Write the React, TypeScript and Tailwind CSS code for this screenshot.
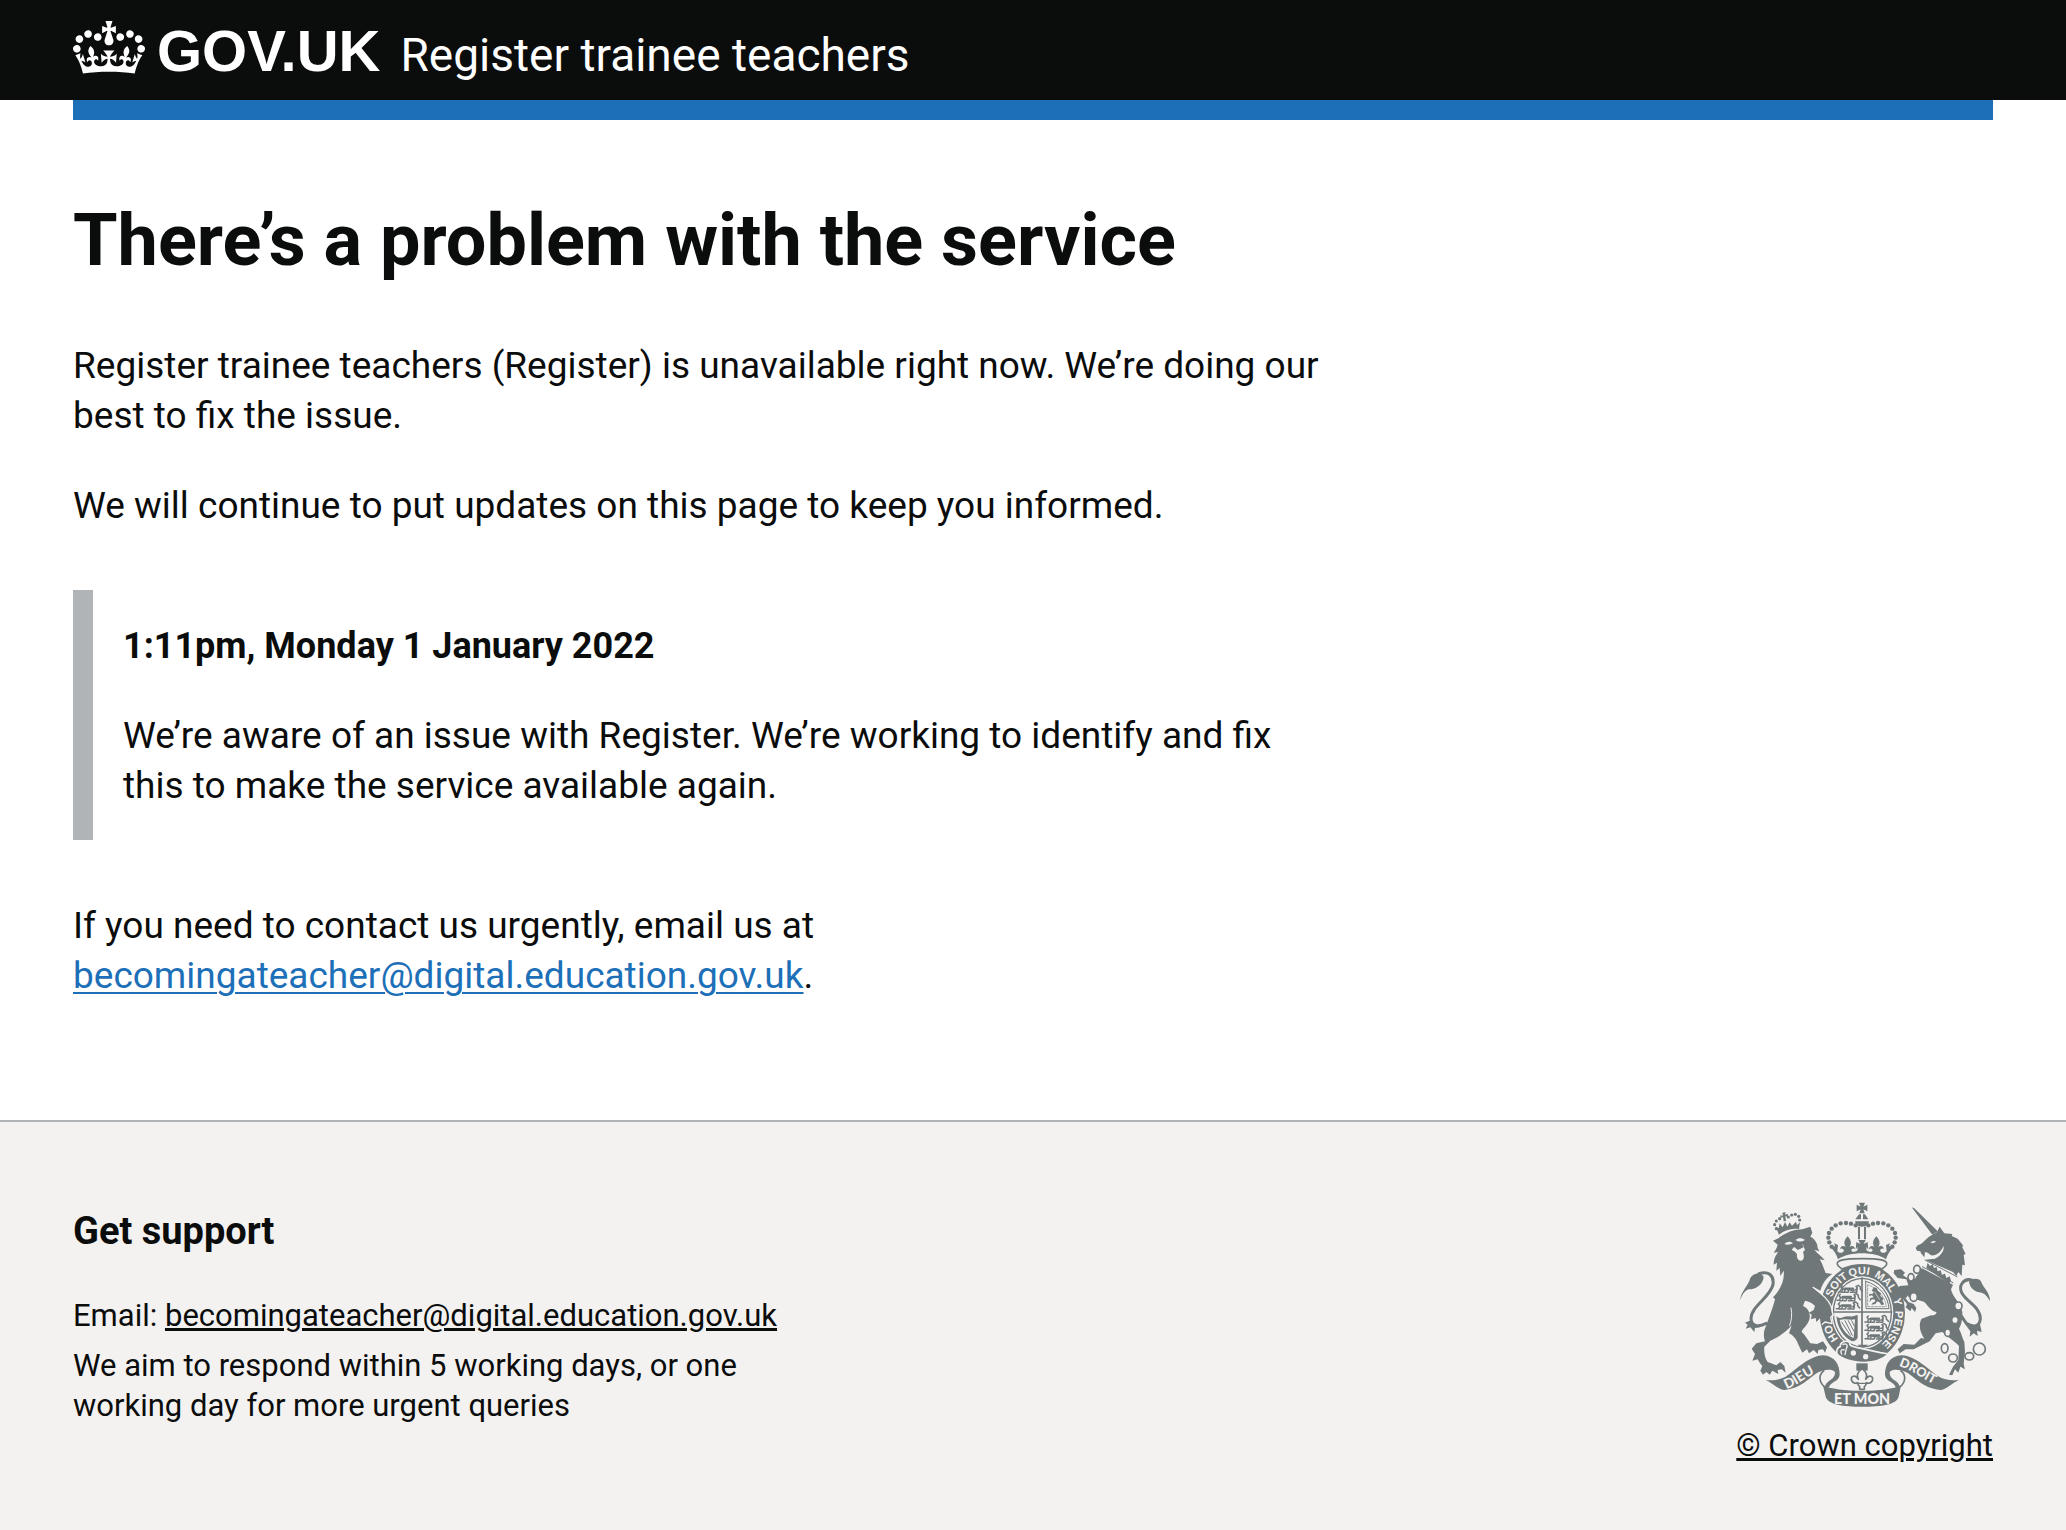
const EMAIL = 'becomingateacher@digital.education.gov.uk';

const CROWN_PATH =
  'M25 30.2c3.5 1.5 7.7-.2 9.1-3.7 1.5-3.6-.2-7.8-3.9-9.2-3.6-1.4-7.6.3-9.1 3.9-1.4 3.5.3 7.5 3.9 9zM9 39.5c3.6 1.5 7.8-.2 9.2-3.7 1.5-3.6-.2-7.8-3.9-9.1-3.6-1.5-7.6.2-9.1 3.8-1.4 3.5.3 7.5 3.8 9zM4.4 57.2c3.5 1.5 7.7-.2 9.1-3.8 1.5-3.6-.2-7.7-3.9-9.1-3.5-1.5-7.6.3-9.1 3.8-1.4 3.5.3 7.6 3.9 9.1zm38.3-21.4c3.5 1.5 7.7-.2 9.1-3.8 1.5-3.6-.2-7.7-3.9-9.1-3.6-1.5-7.6.3-9.1 3.8-1.3 3.6.4 7.7 3.9 9.1zm64.4-5.6c-3.6 1.5-7.8-.2-9.1-3.7-1.5-3.6.2-7.8 3.8-9.2 3.6-1.4 7.7.3 9.2 3.9 1.3 3.5-.4 7.5-3.9 9zm15.9 9.3c-3.6 1.5-7.7-.2-9.1-3.7-1.5-3.6.2-7.8 3.7-9.1 3.6-1.5 7.7.2 9.2 3.8 1.5 3.5-.3 7.5-3.8 9zm4.7 17.7c-3.6 1.5-7.8-.2-9.2-3.8-1.5-3.6.2-7.7 3.9-9.1 3.6-1.5 7.7.3 9.2 3.8 1.3 3.5-.4 7.6-3.9 9.1zM89.3 35.8c-3.6 1.5-7.8-.2-9.2-3.8-1.4-3.6.2-7.7 3.9-9.1 3.6-1.5 7.7.3 9.2 3.8 1.4 3.6-.3 7.7-3.9 9.1zM69.7 17.7l8.9 4.7V9.3l-8.9 2.8c-.2-.3-.5-.6-.9-.9L72.4 0H59.6l3.5 11.2c-.3.3-.6.5-.9.9l-8.8-2.8v13.1l8.8-4.7c.3.3.6.7.9.9l-5 15.4v.1c-.2.8-.4 1.6-.4 2.4 0 4.1 3.1 7.5 7 8.1h.2c.3 0 .7.1 1 .1.4 0 .7 0 1-.1h.2c4-.6 7.1-4.1 7.1-8.1 0-.8-.1-1.7-.4-2.4V34l-5.1-15.4c.4-.2.7-.6 1-.9zM66 92.8c16.9 0 32.8 1.1 47.1 3.2 4-16.9 8.9-26.7 14-33.5l-9.6-3.4c1 4.9 1.1 7.2 0 10.2-1.5-1.4-3-4.3-4.2-8.7L108.6 76c2.8-2 5-3.2 7.5-3.3-4.4 9.4-10 11.9-13.6 11.2-4.3-.8-6.3-4.6-5.6-7.9 1-4.7 5.7-5.9 8-.5 4.3-8.7-3-11.4-7.6-8.8 7.1-7.2 7.9-13.5 2.1-21.1-8 6.1-8.1 12.3-4.5 20.8-4.7-5.4-12.1-2.5-9.5 6.2 3.4-5.2 7.9-2 7.2 3.1-.6 4.3-6.4 7.8-13.5 7.2-10.3-.9-10.9-8-11.2-13.8 2.5-.5 7.1 1.8 11 7.3L80.2 60c-4.1 4.4-8 5.3-12.3 5.4 1.4-4.4 8-11.6 8-11.6H55.5s6.4 7.2 7.9 11.6c-4.2-.1-8-1-12.3-5.4l1.4 16.4c3.9-5.5 8.5-7.7 10.9-7.3-.3 5.8-.9 12.8-11.1 13.8-7.2.6-12.9-2.9-13.5-7.2-.7-5 3.8-8.3 7.1-3.1 2.7-8.7-4.6-11.6-9.4-6.2 3.7-8.5 3.6-14.7-4.6-20.8-5.8 7.6-5 13.9 2.2 21.1-4.7-2.6-11.9.1-7.7 8.8 2.3-5.5 7.1-4.2 8.1.5.7 3.3-1.3 7.1-5.7 7.9-3.5.7-9-1.8-13.5-11.2 2.5.1 4.7 1.3 7.5 3.3l-4.7-15.4c-1.2 4.4-2.7 7.2-4.3 8.7-1.1-3-.9-5.3 0-10.2l-9.5 3.4c5 6.9 9.9 16.7 14 33.5 14.8-2.1 30.8-3.2 47.7-3.2z';

function CrownIcon() {
  return (
    <svg aria-hidden="true" viewBox="0 0 132 97" className="h-[53px] w-[72px] shrink-0 self-start" fill="currentColor">
      <path fillRule="evenodd" d={CROWN_PATH} />
    </svg>
  );
}

const INK = '#6f7779';
const PAPER = '#f3f2f1';

const ARCH_BEADS: [number, number][] = [
  [398, 104], [384, 99], [369, 97], [353, 98], [338, 104], [326, 114], [318, 127], [316, 141], [319, 155], [326, 168],
];

/* Half of the crown's jewelled band: fleur-de-lis, half crosses and the rim. */
const CROWN_HALF =
  'M418 188C388 188 362 194 345 206C341 192 334 180 324 171L336 166L333 158L345 163L343 182C352 190 360 186 363 180C360 172 354 172 352 176C350 166 362 162 369 170C360 158 365 146 374 137C383 146 388 158 379 170C386 162 396 166 396 176C392 171 386 173 385 180C390 186 398 184 404 178L403 168L398 178L400 154L412 160L406 148H418z';

/* Left-hand side of the ribbon under the shield; the right is its mirror. */
const RIBBON_HALF =
  'M128 567C150 572 172 566 188 558C220 538 256 496 300 494C336 496 350 522 350 552C348 574 322 572 318 590L306 590C306 568 338 570 336 544C326 532 300 538 288 544C262 556 240 592 184 598C166 596 152 580 128 567z';

function RoyalArms() {
  return (
    <svg aria-hidden="true" viewBox="48 34 756 618" className="h-[206px] w-[252px]" fill={INK} strokeLinecap="round" strokeLinejoin="round">
      <defs>
        <path id="garter" d="M348 447A99 115 0 0 1 319 366A99 115 0 0 1 418 251A99 115 0 0 1 517 366A99 115 0 0 1 467 466L440 476" />
        <path id="motto-left" d="M190 595C230 582 258 548 312 535" />
        <path id="motto-right" d="M527 526C565 535 600 570 660 592" />
      </defs>

      {/* garter and shield */}
      <ellipse cx="418" cy="367" rx="128" ry="148" />
      <ellipse cx="418" cy="366" rx="93" ry="109" fill={PAPER} />
      <ellipse cx="418" cy="366" rx="89" ry="105" />
      <ellipse cx="418" cy="366" rx="85" ry="101" fill={PAPER} />
      <g fontFamily="Liberation Sans, sans-serif" fontWeight="700" fill={PAPER} fontSize="33">
        <text><textPath href="#garter" startOffset="3">HO</textPath></text>
        <text><textPath href="#garter" startOffset="134">SOIT</textPath></text>
        <text><textPath href="#garter" startOffset="217">QUI</textPath></text>
        <text><textPath href="#garter" startOffset="291">MAL</textPath></text>
        <text><textPath href="#garter" startOffset="382">Y</textPath></text>
        <text><textPath href="#garter" startOffset="418">PENSE</textPath></text>
      </g>
      <path d="M330 364H506M417 262V470" stroke={INK} strokeWidth="5" fill="none" />
      {/* first and fourth quarters: three lions passant */}
      {[[346, 288], [340, 313], [338, 338], [424, 378], [424, 403], [424, 428]].map(([x, y]) => (
        <g key={`${x}-${y}`} transform={`translate(${x} ${y})`} fill="none" stroke={INK} strokeWidth="4.5">
          <path d="M2 16h8l2-8 8-2 6 3 8-2 4 4 14-1 5-6-4-5 7-3 6 5v6l6 7M14 9l-6-7 4-4M20 10l-2 7h-7M32 10l-3 7h-7M44 11v6h-8M56 8l-1 9h-7" />
          <path d="M20 6h24" strokeWidth="7" />
        </g>
      ))}
      {/* second quarter: lion rampant in a tressure */}
      <path d="M428 272L429 354H498C496 320 470 283 428 272z" fill="none" stroke={INK} strokeWidth="3" />
      <path d="M434 282V348H490C486 320 466 294 434 282z" fill="none" stroke={INK} strokeWidth="2" strokeDasharray="7 4" />
      <path d="M452 290l10 2 2 8 10 8-2 8 9 6-3 10 6 9-9 3-4-8-8-4-6 8-12 2 4-6 6-2 2-7-10-1-8 8 3-12 10-2-5-6-9 2 1-6 10-1 3-5-6-4z" />
      <path d="M455 304l8 12 6 10" stroke={PAPER} strokeWidth="2" fill="none" />
      {/* third quarter: harp */}
      <path d="M340 376C352 390 362 374 378 377C392 380 396 373 404 373V440C402 450 392 454 384 450C362 438 344 414 340 376zM350 388C354 412 370 434 392 442L396 386C382 390 366 382 350 388z" fillRule="evenodd" />
      <path d="M366 390l22 44M376 390l17 32M386 390l8 16M356 394l26 40" stroke={INK} strokeWidth="3" fill="none" />
      <path d="M404 462h32l-12 8h-12z" />

      {/* royal crown */}
      <path d="M408 36h18l-5 12 12-6v20l-12-6 4 12h-16l4-12-12 6v-20l12 6z" />
      <path d="M408 71h6v15h-17zM420 71h6l10 15h-16zM396 92h42c-2 10-10 16-21 16s-19-6-21-16zM405 108h6v38h-6zM423 108h6v38h-6z" />
      {[1, -1].map((s) => (
        <g key={s} transform={s === 1 ? undefined : 'translate(834 0) scale(-1 1)'}>
          {ARCH_BEADS.map(([cx, cy]) => (
            <circle key={cx} cx={cx} cy={cy} r="6.6" />
          ))}
          <path d={CROWN_HALF} />
          <circle cx="352" cy="182" r="3" fill={PAPER} />
        </g>
      ))}
      <path d="M417 204C470 204 494 208 491 221C488 230 482 228 478 235Q417 210 356 235C352 228 346 230 343 221C340 208 364 204 417 204z" fill={PAPER} stroke={INK} strokeWidth="5" />

      {/* lion */}
      <g>
        {[[160, 114], [155, 102], [160, 91], [170, 84], [196, 79], [206, 73], [217, 71], [227, 77], [230, 88]].map(([cx, cy]) => (
          <circle key={`${cx}-${cy}`} cx={cx} cy={cy} r="4.8" />
        ))}
        <path d="M178 66l10-1-2 7 8-3 1 9-8-1 2 14-7 1-2-13-7 3-1-8 8 1zM158 108l9 5 3-15 9 12 7-16 7 14 7-13 7 10 12-12 3 10 9-8-3 20C206 112 186 118 168 132z" />
        <path d="M150 150L166 143C186 126 216 116 238 116L262 108L268 126L262 138C274 144 284 156 284 172L289 182L274 177C284 190 298 198 305 209L290 206C300 222 302 234 308 247L328 250C310 262 298 278 292 300L270 288C286 306 312 322 322 344L327 372L318 380L322 394L306 390L298 397L292 382L280 394L278 382L264 386L266 372L258 366L272 358L276 346C268 336 258 332 246 330L240 346C258 354 266 374 256 394C248 410 238 414 236 424C246 432 252 444 262 458L282 460L300 452L312 470L306 486L300 476L286 478L284 490L272 478L258 488L252 476L238 486L228 466C222 450 214 436 198 428L206 404C190 424 160 444 142 450L124 468C122 484 126 504 134 514L160 524L172 514L184 526L188 546L176 536L164 538L166 550L148 540L140 552L130 544L120 552L112 540L118 526L110 516L104 506L88 510L96 490L86 474L100 458L126 452C120 436 122 420 130 404C140 376 152 344 156 326L150 320C170 300 186 270 182 240L172 256L170 232L160 240L162 216L152 222C152 202 160 192 166 184L152 186C158 178 162 170 164 162z" />
        <path d="M184 160C194 150 204 152 210 158C202 162 192 164 184 160zM218 148C226 140 238 142 246 148C236 154 226 154 218 148zM206 178C218 160 236 158 240 162L246 178L240 184C244 196 244 206 236 210C226 212 220 202 222 190L214 182z" fill={PAPER} />
        <path d="M208 164L236 158L242 170L224 178z" />
        <path d="M270 290C292 306 316 326 324 346L331 374L323 380L327 399L306 394L298 401" stroke={PAPER} strokeWidth="4" fill="none" />
        <path d="M204 352C208 370 206 390 200 404" stroke={PAPER} strokeWidth="3" fill="none" />
        <path d="M108 249C136 240 154 254 150 282C142 320 84 346 84 384C86 408 104 410 130 398" stroke={INK} strokeWidth="9" fill="none" />
        <path d="M52 328C52 304 76 286 82 262C92 246 112 244 122 258C120 280 102 296 76 296C64 302 56 314 52 328zM66 396L80 390L112 410L96 412L94 424L82 410L68 414L74 402z" />
      </g>

      {/* unicorn */}
      <g>
        <path d="M566 50L574 53L644 122L628 132z" />
        <path d="M618 138L642 124L650 108L664 128L688 130L686 136L704 144L720 164L718 170L728 190L722 192L726 224L718 222L716 256L706 244L700 256L690 244L606 208C614 204 626 206 636 204C650 196 664 184 662 166C652 186 640 196 624 194L614 186L606 184L604 200L594 188L592 182L582 180L578 172L584 164C598 160 606 148 618 138z" />
        <path d="M622 154L636 150L638 154L628 158z" fill={PAPER} />
        <path d="M604 206L704 258L692 282L596 230z" fill={PAPER} />
        <path d="M606 208L702 258M598 228L690 276" stroke={INK} strokeWidth="3" fill="none" />
        <path d="M610 232l4-16 7 10 8-6 4 12 8-3 3 13 9-3 4 13 9-3 4 13 10-5 4 14-6 8z" />
        <path d="M596 232L690 282L684 296C688 320 712 334 718 364C718 386 716 402 708 414C716 430 718 442 724 454L726 484L722 520L726 536L712 528L706 546L696 536L688 554L678 552L690 528L706 508L708 466C696 452 672 438 658 424L638 428L620 452L572 476L548 476L530 488L524 476L542 460L574 462L594 442L604 444C590 424 586 400 596 384L624 374C634 376 642 370 640 364C624 362 616 346 604 334L574 324L556 318L542 300L538 296L540 312L556 334L572 340L580 352L576 364L566 352L562 362L548 350L552 340L534 318L524 310L530 286L556 284L550 266L524 262L512 248L514 238L534 236L546 246L540 254L562 268L576 264C582 252 592 244 596 232z" />
        <path d="M524 290L536 286L560 300L550 322L542 320z" />
        <g fill={PAPER} stroke={INK} strokeWidth="5">
          <ellipse cx="582" cy="236" rx="10" ry="12" />
          <ellipse cx="564" cy="260" rx="9" ry="11" />
          <ellipse cx="572" cy="319" rx="11" ry="13" />
          <ellipse cx="706" cy="346" rx="11" ry="12" />
          <ellipse cx="696" cy="388" rx="10" ry="11" />
          <ellipse cx="674" cy="426" rx="9" ry="11" />
          <ellipse cx="665" cy="473" rx="10" ry="14" />
          <ellipse cx="690" cy="502" rx="13" ry="12" />
          <ellipse cx="739" cy="497" rx="13" ry="11" />
          <circle cx="769" cy="475" r="18" />
        </g>
        <path d="M746 268C722 262 706 284 716 306C728 332 772 348 772 384C770 408 752 412 730 398L712 372" stroke={INK} strokeWidth="9" fill="none" />
        <path d="M801 332C802 306 778 288 774 272C764 260 746 264 738 274C742 294 756 304 776 306C788 310 794 320 801 332zM726 400L742 422L740 438L752 428L764 436L762 420L776 424L770 396L756 410z" />
      </g>

      {/* buckle of the garter */}
      <path d="M346 494C336 486 342 470 352 468C350 456 368 446 380 456C378 468 392 468 400 470L472 486L498 490C470 514 430 520 390 512C372 508 360 504 346 494z" stroke={PAPER} strokeWidth="5" />
      <path d="M356 490C350 482 356 474 364 478M360 462C370 456 376 464 370 474L366 492" stroke={PAPER} strokeWidth="4" fill="none" />
      <circle cx="391" cy="487" r="8" fill={PAPER} />
      <circle cx="428" cy="498" r="8" fill={PAPER} />

      {/* motto ribbon */}
      {[1, -1].map((s) => (
        <g key={s} transform={s === 1 ? undefined : 'translate(836 0) scale(-1 1)'}>
          <path d={RIBBON_HALF} />
          <path d="M302 541C286 552 288 574 304 588" stroke={INK} strokeWidth="5" fill="none" />
        </g>
      ))}
      <path d="M300 584C340 606 494 606 534 584L527 618C520 642 476 648 418 648C360 648 316 642 308 618z" />
      <g fontFamily="Lato, sans-serif" fontWeight="900" fill={PAPER}>
        <text fontSize="41"><textPath href="#motto-left">DIEU</textPath></text>
        <text fontSize="38"><textPath href="#motto-right">DROIT</textPath></text>
        <text x="417" y="639" textAnchor="middle" fontSize="43">ET MON</text>
      </g>

      {/* pendant fleur-de-lis */}
      <path d="M400 518h34v22h-34z" />
      <path d="M417 534C430 544 434 556 428 566C438 550 452 556 448 570C444 580 434 578 430 576C430 584 426 586 424 588V596H410V588C408 586 404 584 404 576C400 578 390 580 386 570C382 556 396 550 406 566C400 556 404 544 417 534z" fill={PAPER} stroke={INK} strokeWidth="5" />
      <path d="M404 578H430" stroke={INK} strokeWidth="4" />
    </svg>
  );
}

function Header() {
  return (
    <header className="bg-[#0b0c0c] px-[73px] text-white">
      <div className="mx-auto h-[100px] max-w-[1920px] pt-[21px]">
        <a href="#home" className="flex items-baseline gap-3 leading-[60px]" aria-label="GOV.UK Register trainee teachers">
          <CrownIcon />
          <span className="font-['Liberation_Sans',sans-serif] text-[58px] font-bold">GOV.UK</span>
          <span className="pl-2 text-[46px]">Register trainee teachers</span>
        </a>
      </div>
    </header>
  );
}

function Footer() {
  return (
    <footer className="border-t-2 border-[#b1b4b6] bg-[#f3f2f1] px-[73px] pt-20 pb-16 text-[31px] leading-10">
      <div className="mx-auto flex max-w-[1920px] items-start justify-between">
        <div className="max-w-[740px]">
          <h2 className="mb-9 text-[38px] leading-[58px] font-bold">Get support</h2>
          <p className="mb-[10px]">
            Email:{' '}
            <a href={`mailto:${EMAIL}`} className="underline decoration-[3px] underline-offset-2">
              {EMAIL}
            </a>
          </p>
          <p>We aim to respond within 5 working days, or one working day for more urgent queries</p>
        </div>
        <a href="#copyright" className="flex flex-col items-center gap-[18px] underline decoration-[3px] underline-offset-2">
          <RoyalArms />
          <span>© Crown copyright</span>
        </a>
      </div>
    </footer>
  );
}

export default function App() {
  return (
    <div className="flex min-h-screen flex-col bg-[#f3f2f1] font-[Roboto,sans-serif] text-[#0b0c0c]">
      <Header />
      <div className="bg-white px-[73px]">
        <div className="mx-auto max-w-[1920px]">
          <div className="h-5 bg-[#1d70b8]" />
          <main className="w-2/3 pt-[81px] pr-5 pb-[119px] text-[37px] leading-[50px]">
            <h1 className="mb-[60px] text-[72px] leading-20 font-bold">There’s a problem with the service</h1>
            <p className="mb-10">
              Register trainee teachers (Register) is unavailable right now. We’re doing our best to fix the issue.
            </p>
            <p>We will continue to put updates on this page to keep you informed.</p>
            <div className="mt-[59px] mb-[61px] border-l-[20px] border-[#b1b4b6] px-[30px] pt-[31px] pb-[29px]">
              <h2 className="mb-10 text-[36px] font-bold">1:11pm, Monday 1 January 2022</h2>
              <p>We’re aware of an issue with Register. We’re working to identify and fix this to make the service available again.</p>
            </div>
            <p>
              If you need to contact us urgently, email us at{' '}
              <a href={`mailto:${EMAIL}`} className="text-[#1d70b8] underline decoration-2 underline-offset-4">
                {EMAIL}
              </a>
              .
            </p>
          </main>
        </div>
      </div>
      <Footer />
    </div>
  );
}
